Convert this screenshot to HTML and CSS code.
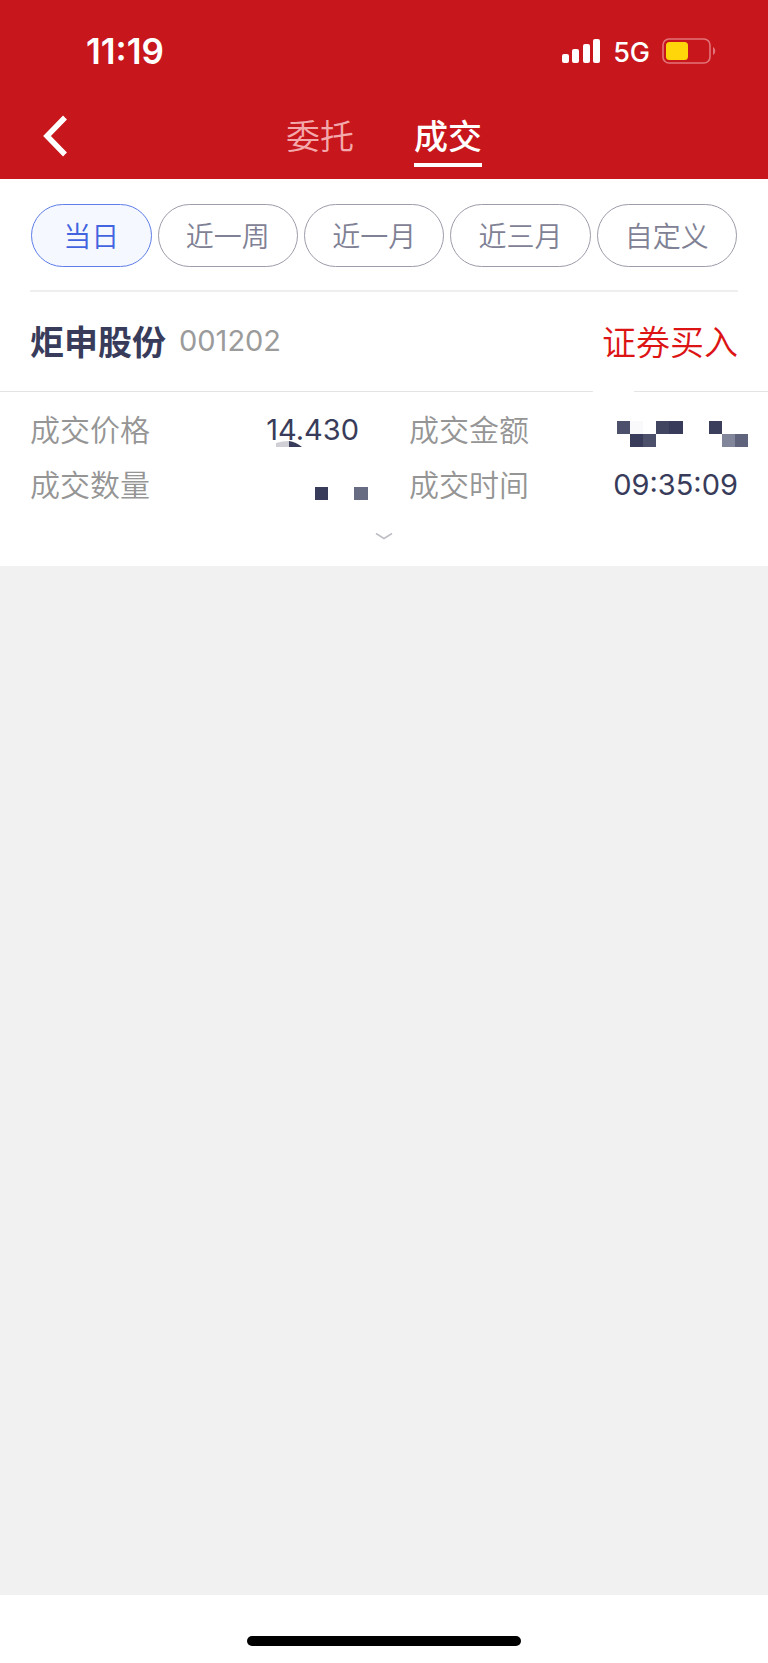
FILE: index.html
```html
<!DOCTYPE html>
<html lang="zh-CN">
  <head>
    <meta charset="UTF-8" />
    <meta name="viewport" content="width=device-width, initial-scale=1.0" />
    <title>成交</title>
    <link rel="stylesheet" href="styles.css">
  </head>
  <body>
    <header class="header">
      <div class="status">
        <span class="time">11:19</span>
        <div class="status-right">
          <svg class="signal" width="40" height="26" viewBox="0 0 40 26" fill="#fff">
            <rect x="1" y="16" width="7" height="9" rx="2" />
            <rect x="11" y="11" width="7" height="14" rx="2" />
            <rect x="22" y="6" width="7" height="19" rx="2" />
            <rect x="32" y="1" width="7" height="24" rx="2" />
          </svg>
          <span class="network">5G</span>
          <svg class="battery" width="54" height="26" viewBox="0 0 54 26">
            <rect x="1" y="1" width="47" height="24" rx="6" fill="none" stroke="#e37479" stroke-width="1.6" />
            <rect x="4" y="4" width="22" height="18" rx="3.500" fill="#ffd60a" />
            <path d="M51 9c3 1.500 3 6.500 0 8z" fill="#e37479" />
          </svg>
        </div>
      </div>
      <nav class="nav">
        <button class="back" type="button" aria-label="返回">
          <svg width="26" height="42" viewBox="0 0 26 42" fill="none" stroke="#fff" stroke-width="5.500">
            <path d="M23 2.500 5 21l18 18.500" />
          </svg>
        </button>
        <ul class="tabs">
          <li><a href="#">委托</a></li>
          <li class="on"><a href="#">成交</a></li>
        </ul>
      </nav>
    </header>

    <main class="container">
      <div class="filter">
        <button class="on" type="button">当日</button>
        <button type="button">近一周</button>
        <button type="button">近一月</button>
        <button type="button">近三月</button>
        <button type="button">自定义</button>
      </div>

      <section class="deal">
        <div class="deal-title">
          <h2>炬申股份</h2>
          <span class="code">001202</span>
          <span class="type">证券买入</span>
        </div>
        <dl class="deal-info">
          <div class="item">
            <dt>成交价格</dt>
            <dd>14.430
              <svg class="smudge" width="26" height="6" viewBox="0 0 26 6">
                <path d="M0 2Q6 0 13 0V6H0z" fill="#cfcfd5" />
                <path d="M13 0Q20 1 26 6H13z" fill="#383c5a" />
              </svg>
            </dd>
          </div>
          <div class="item">
            <dt>成交金额</dt>
            <dd>
              <!-- 隐藏金额 -->
              <svg class="mosaic" width="131" height="26" viewBox="0 0 131 26" role="img" aria-label="已隐藏">
                <path d="M0 0h13v13H0z" fill="#4c506b" />
                <path d="M13 0h13v13H13z" fill="#f9f9fc" />
                <path d="M39 0h13v13H39z" fill="#42455f" />
                <path d="M52 0h14v13H52z" fill="#383c5a" />
                <path d="M13 13h13v13H13z" fill="#383c5a" />
                <path d="M26 13h13v13H26z" fill="#4c506b" />
                <path d="M92 0h13v13H92z" fill="#3b3f5c" />
                <path d="M105 13h13v13h-13z" fill="#82869a" />
                <path d="M118 13h13v13h-13z" fill="#5f637c" />
              </svg>
            </dd>
          </div>
          <div class="item">
            <dt>成交数量</dt>
            <dd>
              <!-- 隐藏数量 -->
              <svg class="mosaic count" width="53" height="13" viewBox="0 0 53 13" role="img" aria-label="已隐藏">
                <path d="M0 0h13v13H0z" fill="#383c5a" />
                <path d="M39 0h14v13H39z" fill="#686c83" />
              </svg>
            </dd>
          </div>
          <div class="item">
            <dt>成交时间</dt>
            <dd>09:35:09</dd>
          </div>
        </dl>
        <button class="more" type="button" aria-label="展开">
          <svg width="18" height="9" viewBox="0 0 18 9" fill="none" stroke="#bfc0c6" stroke-width="1.600">
            <path d="M1 1.500 9 6.500l8-5" />
          </svg>
        </button>
      </section>
    </main>

    <footer class="home"><span></span></footer>
  </body>
</html>
```

FILE: styles.css
```css
* {
  margin: 0;
  padding: 0;
  box-sizing: border-box;
}
body {
  display: flex;
  flex-direction: column;
  min-height: 100vh;
  font-family: Inter, "Noto Sans CJK SC", sans-serif;
  font-size: 29px;
  color: #383c5a;
  background-color: #f1f1f1;
}
ul {
  list-style: none;
}
a {
  text-decoration: none;
}
button {
  font: inherit;
  border: none;
  background: none;
  cursor: pointer;
}
svg {
  display: block;
}

/* header */
.header {
  background-color: #c7161c;
  color: #fff;
}
.status {
  display: flex;
  justify-content: space-between;
  align-items: center;
  height: 102px;
  padding: 0 52px 0 86px;
}
.time {
  font-size: 35px;
  font-weight: 600;
}
.status-right {
  display: flex;
  align-items: center;
  gap: 12px;
}
.network {
  padding-top: 2px;
  font-size: 27px;
  font-weight: 500;
}
.nav {
  display: grid;
  grid-template-columns: 1fr auto 1fr;
  height: 77px;
  padding: 0 42px;
}
.back {
  justify-self: start;
  align-self: start;
  padding-top: 13px;
}
.tabs {
  display: flex;
  gap: 60px;
}
.tabs a {
  display: block;
  height: 65px;
  font-size: 34px;
  font-weight: 350;
  line-height: 70px;
  color: #f3a9ab;
}
.tabs .on a {
  font-weight: 500;
  color: #fff;
  border-bottom: 4px solid #fff;
}

/* filter */
.container {
  background-color: #fff;
}
.filter {
  display: flex;
  gap: 6px;
  margin: 0 30px;
  padding: 25px 1px 23px;
  border-bottom: 2px solid #eee;
}
.filter button {
  flex: 7;
  height: 63px;
  padding-bottom: 2px;
  font-size: 28px;
  font-weight: 350;
  color: #7f8195;
  border: 1px solid #9c9caa;
  border-radius: 32px;
}
.filter button.on {
  flex: 6;
  color: #4364e0;
  background-color: #f5f8fe;
  border-color: #5f7de8;
}

/* deal */
.deal-title {
  position: relative;
  display: flex;
  align-items: center;
  height: 100px;
  padding: 0 30px 2px;
  border-bottom: 1px solid #e4e4e4;
}
.deal-title::after {
  content: "";
  position: absolute;
  right: 134px;
  bottom: -1px;
  width: 41px;
  height: 1px;
  background-color: #fff;
}
.deal-title h2 {
  font-size: 34px;
  font-weight: 700;
}
.code {
  margin-left: 13px;
  color: #9b9b9b;
}
.type {
  margin-left: auto;
  font-size: 34px;
  font-weight: 350;
  color: #dc1414;
}
.deal-info {
  display: grid;
  grid-template-columns: 1fr 1fr;
  column-gap: 50px;
  padding: 10px 30px 1px;
}
.item {
  display: flex;
  justify-content: space-between;
  align-items: center;
  height: 55px;
}
.item dt {
  padding-bottom: 4px;
  font-size: 30px;
  font-weight: 350;
  color: #959595;
}
.item dd {
  position: relative;
}
.smudge {
  position: absolute;
  right: 57px;
  bottom: 0;
}
.mosaic {
  position: absolute;
  top: -9px;
  right: -10px;
}
.mosaic.count {
  top: 2px;
  right: -9px;
}
.more {
  display: flex;
  justify-content: center;
  width: 100%;
  padding: 19px 0 25px;
}

/* home */
.home {
  display: flex;
  justify-content: center;
  height: 68px;
  margin-top: auto;
  padding-top: 41px;
  background-color: #fff;
}
.home span {
  width: 274px;
  height: 10px;
  border-radius: 5px;
  background-color: #000;
}
```
